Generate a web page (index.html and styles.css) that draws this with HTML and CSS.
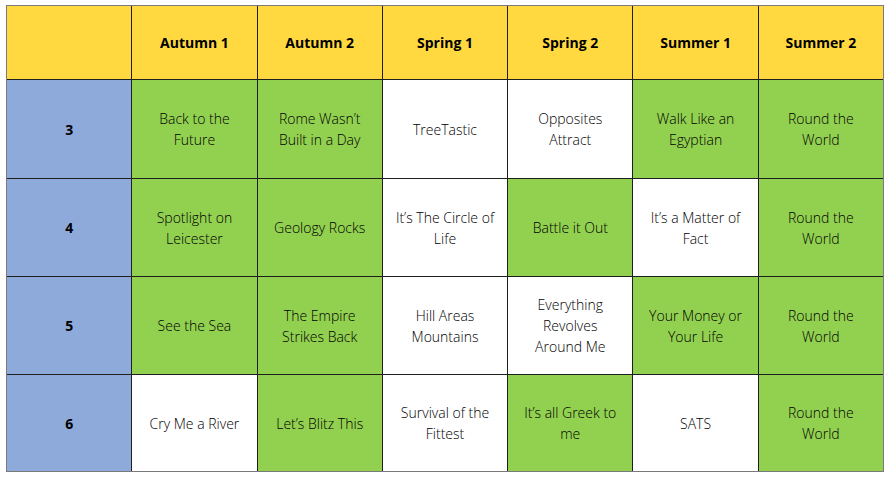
FILE: index.html
```html
<!DOCTYPE html>
<html>
<head>
<meta charset="utf-8">
<link rel="stylesheet" href="styles.css">
</head>
<body>
<div class="grid">
  <div class="cell head"></div>
  <div class="cell head">Autumn 1</div>
  <div class="cell head">Autumn 2</div>
  <div class="cell head">Spring 1</div>
  <div class="cell head">Spring 2</div>
  <div class="cell head">Summer 1</div>
  <div class="cell head">Summer 2</div>

  <div class="cell year">3</div>
  <div class="cell g">Back to the<br>Future</div>
  <div class="cell g">Rome Wasn’t<br>Built in a Day</div>
  <div class="cell w">TreeTastic</div>
  <div class="cell w">Opposites<br>Attract</div>
  <div class="cell g">Walk Like an<br>Egyptian</div>
  <div class="cell g">Round the<br>World</div>

  <div class="cell year">4</div>
  <div class="cell g">Spotlight on<br>Leicester</div>
  <div class="cell g">Geology Rocks</div>
  <div class="cell w">It’s The Circle of<br>Life</div>
  <div class="cell g">Battle it Out</div>
  <div class="cell w">It’s a Matter of<br>Fact</div>
  <div class="cell g">Round the<br>World</div>

  <div class="cell year">5</div>
  <div class="cell g">See the Sea</div>
  <div class="cell g">The Empire<br>Strikes Back</div>
  <div class="cell w">Hill Areas<br>Mountains</div>
  <div class="cell w">Everything<br>Revolves<br>Around Me</div>
  <div class="cell g">Your Money or<br>Your Life</div>
  <div class="cell g">Round the<br>World</div>

  <div class="cell year">6</div>
  <div class="cell w">Cry Me a River</div>
  <div class="cell g">Let’s Blitz This</div>
  <div class="cell w">Survival of the<br>Fittest</div>
  <div class="cell g">It’s all Greek to<br>me</div>
  <div class="cell w">SATS</div>
  <div class="cell g">Round the<br>World</div>
</div>
</body>
</html>
```
FILE: styles.css
```css
html, body {
  margin: 0;
  background: #ffffff;
}
body {
  padding: 5px 6px;
  font-family: "Open Sans", "Liberation Sans", sans-serif;
  font-size: 14px;
  color: #000000;
}
.grid {
  width: 878px;
  box-sizing: border-box;
  display: grid;
  grid-template-columns: repeat(7, 1fr);
  grid-template-rows: 73px 98px 97px 97px 96px;
  gap: 1px;
  background: #1e1e1e;
  border: 1px solid #7a7a7a;
}
.cell {
  display: flex;
  align-items: center;
  justify-content: center;
  text-align: center;
  line-height: 21px;
  padding: 0 2px;
  font-weight: 300;
  white-space: nowrap;
}
.head {
  background: #ffd93f;
  font-weight: 700;
}
.year {
  background: #8eaadb;
  font-weight: 700;
}
.g { background: #92d050; }
.w { background: #ffffff; }
```
